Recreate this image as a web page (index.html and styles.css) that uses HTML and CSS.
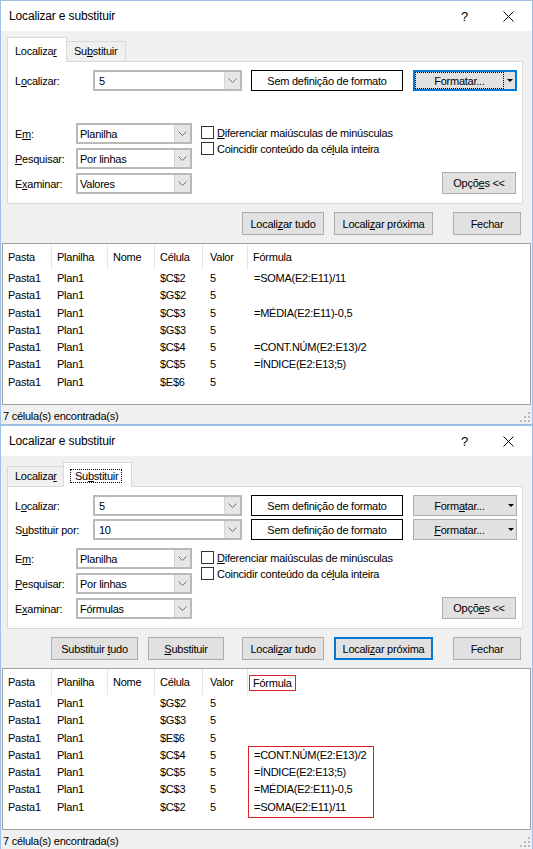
FILE: index.html
```html
<!DOCTYPE html>
<html lang="pt">
<head>
<meta charset="utf-8">
<title>Localizar e substituir</title>
<link rel="stylesheet" href="styles.css">
</head>
<body>

<div class="dialog">
  <div class="titlebar">
    <span class="title">Localizar e substituir</span>
    <span class="help">?</span>
    <span class="close"><svg width="11" height="11" viewBox="0 0 11 11"><path d="M0.5 0.5L10.5 10.5M10.5 0.5L0.5 10.5" stroke="#000" stroke-width="1" fill="none"/></svg></span>
  </div>
  <div class="body">
    <div class="tabs">
      <div class="tab active t-loc-a">Localiza<u>r</u></div>
      <div class="tab t-sub-i">Su<u>b</u>stituir</div>
    </div>
    <div class="panel">
      <div class="row">
        <span class="lbl-top">L<u>o</u>calizar:</span>
        <div class="combo wide"><span class="val">5</span><span class="arrow"><svg width="9" height="5" viewBox="0 0 9 5"><polyline points="0.5,0.5 4.5,4.5 8.5,0.5" fill="none" stroke="#707070" stroke-width="1"/></svg></span></div>
        <div class="fmtbox">Sem definição de formato</div>
        <div class="btn split focus"><span class="splitmain"><span>Formatar...</span></span><span class="caret"></span></div>
      </div>
      <div class="row-spacer"></div>
      <div class="options">
        <div class="fields">
          <div class="field"><span class="flbl">E<u>m</u>:</span><div class="combo narrow"><span class="val">Planilha</span><span class="arrow"><svg width="9" height="5" viewBox="0 0 9 5"><polyline points="0.5,0.5 4.5,4.5 8.5,0.5" fill="none" stroke="#707070" stroke-width="1"/></svg></span></div></div>
          <div class="field"><span class="flbl"><u>P</u>esquisar:</span><div class="combo narrow"><span class="val">Por linhas</span><span class="arrow"><svg width="9" height="5" viewBox="0 0 9 5"><polyline points="0.5,0.5 4.5,4.5 8.5,0.5" fill="none" stroke="#707070" stroke-width="1"/></svg></span></div></div>
          <div class="field"><span class="flbl">E<u>x</u>aminar:</span><div class="combo narrow"><span class="val">Valores</span><span class="arrow"><svg width="9" height="5" viewBox="0 0 9 5"><polyline points="0.5,0.5 4.5,4.5 8.5,0.5" fill="none" stroke="#707070" stroke-width="1"/></svg></span></div></div>
        </div>
        <div class="checks">
          <div class="check"><span class="box"></span><span><u>D</u>iferenciar maiúsculas de minúsculas</span></div>
          <div class="check"><span class="box"></span><span>Coincidir conteúdo da cé<u>l</u>ula inteira</span></div>
        </div>
        <div class="btn opts"><span>Opçõ<u>e</u>s &lt;&lt;</span></div>
      </div>
    </div>
    <div class="actions">
      <div class="btn b-loctudo"><span>Locali<u>z</u>ar tudo</span></div>
      <div class="btn b-locprox"><span>Locali<u>z</u>ar próxima</span></div>
      <div class="btn b-fechar"><span>Fechar</span></div>
    </div>
  </div>
  <div class="list">
    <div class="lrow head">
      <div class="c">Pasta</div><div class="c">Planilha</div><div class="c">Nome</div><div class="c">Célula</div><div class="c cv">Valor</div><div class="c cf">Fórmula</div>
    </div>
    <div class="lrow"><div class="c">Pasta1</div><div class="c">Plan1</div><div class="c"></div><div class="c">$C$2</div><div class="c cv">5</div><div class="c cf">=SOMA(E2:E11)/11</div></div>
    <div class="lrow"><div class="c">Pasta1</div><div class="c">Plan1</div><div class="c"></div><div class="c">$G$2</div><div class="c cv">5</div><div class="c cf"></div></div>
    <div class="lrow"><div class="c">Pasta1</div><div class="c">Plan1</div><div class="c"></div><div class="c">$C$3</div><div class="c cv">5</div><div class="c cf">=MÉDIA(E2:E11)-0,5</div></div>
    <div class="lrow"><div class="c">Pasta1</div><div class="c">Plan1</div><div class="c"></div><div class="c">$G$3</div><div class="c cv">5</div><div class="c cf"></div></div>
    <div class="lrow"><div class="c">Pasta1</div><div class="c">Plan1</div><div class="c"></div><div class="c">$C$4</div><div class="c cv">5</div><div class="c cf">=CONT.NÚM(E2:E13)/2</div></div>
    <div class="lrow"><div class="c">Pasta1</div><div class="c">Plan1</div><div class="c"></div><div class="c">$C$5</div><div class="c cv">5</div><div class="c cf">=ÍNDICE(E2:E13;5)</div></div>
    <div class="lrow"><div class="c">Pasta1</div><div class="c">Plan1</div><div class="c"></div><div class="c">$E$6</div><div class="c cv">5</div><div class="c cf"></div></div>
  </div>
  <div class="status">
    <span>7 célula(s) encontrada(s)</span>
    <svg class="grip" width="10" height="10" viewBox="0 0 10 10"><rect x="8" y="0" width="2" height="2" fill="#b9b9b9"/><rect x="4" y="4" width="2" height="2" fill="#b9b9b9"/><rect x="8" y="4" width="2" height="2" fill="#b9b9b9"/><rect x="0" y="8" width="2" height="2" fill="#b9b9b9"/><rect x="4" y="8" width="2" height="2" fill="#b9b9b9"/><rect x="8" y="8" width="2" height="2" fill="#b9b9b9"/></svg>
  </div>
</div>

<div class="dialog">
  <div class="titlebar">
    <span class="title">Localizar e substituir</span>
    <span class="help">?</span>
    <span class="close"><svg width="11" height="11" viewBox="0 0 11 11"><path d="M0.5 0.5L10.5 10.5M10.5 0.5L0.5 10.5" stroke="#000" stroke-width="1" fill="none"/></svg></span>
  </div>
  <div class="body">
    <div class="tabs">
      <div class="tab t-loc-i">Localiza<u>r</u></div>
      <div class="tab active t-sub-a"><span class="tabfocus">Su<u>b</u>stituir</span></div>
    </div>
    <div class="panel">
      <div class="row">
        <span class="lbl-top">L<u>o</u>calizar:</span>
        <div class="combo wide"><span class="val">5</span><span class="arrow"><svg width="9" height="5" viewBox="0 0 9 5"><polyline points="0.5,0.5 4.5,4.5 8.5,0.5" fill="none" stroke="#707070" stroke-width="1"/></svg></span></div>
        <div class="fmtbox">Sem definição de formato</div>
        <div class="btn split"><span class="splitmain"><span>Form<u>a</u>tar...</span></span><span class="caret"></span></div>
      </div>
      <div class="row">
        <span class="lbl-top">S<u>u</u>bstituir por:</span>
        <div class="combo wide"><span class="val">10</span><span class="arrow"><svg width="9" height="5" viewBox="0 0 9 5"><polyline points="0.5,0.5 4.5,4.5 8.5,0.5" fill="none" stroke="#707070" stroke-width="1"/></svg></span></div>
        <div class="fmtbox">Sem definição de formato</div>
        <div class="btn split"><span class="splitmain"><span><u>F</u>ormatar...</span></span><span class="caret"></span></div>
      </div>
      <div class="options">
        <div class="fields">
          <div class="field"><span class="flbl">E<u>m</u>:</span><div class="combo narrow"><span class="val">Planilha</span><span class="arrow"><svg width="9" height="5" viewBox="0 0 9 5"><polyline points="0.5,0.5 4.5,4.5 8.5,0.5" fill="none" stroke="#707070" stroke-width="1"/></svg></span></div></div>
          <div class="field"><span class="flbl"><u>P</u>esquisar:</span><div class="combo narrow"><span class="val">Por linhas</span><span class="arrow"><svg width="9" height="5" viewBox="0 0 9 5"><polyline points="0.5,0.5 4.5,4.5 8.5,0.5" fill="none" stroke="#707070" stroke-width="1"/></svg></span></div></div>
          <div class="field"><span class="flbl">E<u>x</u>aminar:</span><div class="combo narrow"><span class="val">Fórmulas</span><span class="arrow"><svg width="9" height="5" viewBox="0 0 9 5"><polyline points="0.5,0.5 4.5,4.5 8.5,0.5" fill="none" stroke="#707070" stroke-width="1"/></svg></span></div></div>
        </div>
        <div class="checks">
          <div class="check"><span class="box"></span><span><u>D</u>iferenciar maiúsculas de minúsculas</span></div>
          <div class="check"><span class="box"></span><span>Coincidir conteúdo da cé<u>l</u>ula inteira</span></div>
        </div>
        <div class="btn opts"><span>Opçõ<u>e</u>s &lt;&lt;</span></div>
      </div>
    </div>
    <div class="actions">
      <div class="btn b-subtudo"><span>Substituir <u>t</u>udo</span></div>
      <div class="btn b-sub"><span><u>S</u>ubstituir</span></div>
      <div class="btn b-loctudo b-gap"><span>Locali<u>z</u>ar tudo</span></div>
      <div class="btn b-locprox focusb"><span>Locali<u>z</u>ar próxima</span></div>
      <div class="btn b-fechar"><span>Fechar</span></div>
    </div>
  </div>
  <div class="list">
    <div class="lrow head">
      <div class="c">Pasta</div><div class="c">Planilha</div><div class="c">Nome</div><div class="c">Célula</div><div class="c cv">Valor</div><div class="c cf"><span class="redbox">Fórmula</span></div>
    </div>
    <div class="lrow"><div class="c">Pasta1</div><div class="c">Plan1</div><div class="c"></div><div class="c">$G$2</div><div class="c cv">5</div><div class="c cf"></div></div>
    <div class="lrow"><div class="c">Pasta1</div><div class="c">Plan1</div><div class="c"></div><div class="c">$G$3</div><div class="c cv">5</div><div class="c cf"></div></div>
    <div class="lrow"><div class="c">Pasta1</div><div class="c">Plan1</div><div class="c"></div><div class="c">$E$6</div><div class="c cv">5</div><div class="c cf"></div></div>
    <div class="lrow"><div class="c">Pasta1</div><div class="c">Plan1</div><div class="c"></div><div class="c">$C$4</div><div class="c cv">5</div><div class="c cf">=CONT.NÚM(E2:E13)/2</div></div>
    <div class="lrow"><div class="c">Pasta1</div><div class="c">Plan1</div><div class="c"></div><div class="c">$C$5</div><div class="c cv">5</div><div class="c cf">=ÍNDICE(E2:E13;5)</div></div>
    <div class="lrow"><div class="c">Pasta1</div><div class="c">Plan1</div><div class="c"></div><div class="c">$C$3</div><div class="c cv">5</div><div class="c cf">=MÉDIA(E2:E11)-0,5</div></div>
    <div class="lrow"><div class="c">Pasta1</div><div class="c">Plan1</div><div class="c"></div><div class="c">$C$2</div><div class="c cv">5</div><div class="c cf">=SOMA(E2:E11)/11</div></div>
    <div class="redmark"></div>
  </div>
  <div class="status">
    <span>7 célula(s) encontrada(s)</span>
    <svg class="grip" width="10" height="10" viewBox="0 0 10 10"><rect x="8" y="0" width="2" height="2" fill="#b9b9b9"/><rect x="4" y="4" width="2" height="2" fill="#b9b9b9"/><rect x="8" y="4" width="2" height="2" fill="#b9b9b9"/><rect x="0" y="8" width="2" height="2" fill="#b9b9b9"/><rect x="4" y="8" width="2" height="2" fill="#b9b9b9"/><rect x="8" y="8" width="2" height="2" fill="#b9b9b9"/></svg>
  </div>
</div>

</body>
</html>
```

FILE: styles.css
```css
* { box-sizing: border-box; }
html, body { margin: 0; padding: 0; }
body {
  width: 533px;
  height: 849px;
  overflow: hidden;
  background: #f0f0f0;
  color: #000;
  font-family: "Liberation Sans", Arial, sans-serif;
  font-size: 11px;
  letter-spacing: -0.25px;
}
u { text-decoration: underline; text-underline-offset: 1px; }

.dialog {
  width: 533px;
  border: 1px solid #9dc0e6;
  background: #f0f0f0;
  display: flex;
  flex-direction: column;
}

.titlebar {
  height: 30px;
  flex: none;
  background: #fff;
  display: flex;
  align-items: center;
  padding-left: 8px;
}
.title { font-size: 12px; letter-spacing: -0.15px; }
.help { margin-left: auto; font-size: 13px; width: 8px; }
.close { display: flex; margin-left: 34px; margin-right: 18px; }

.body { flex: none; padding: 6px 9px 0 6px; }

.tabs { display: flex; align-items: flex-end; height: 24px; }
.tab {
  height: 20px;
  line-height: 13px;
  padding: 3px 0 3px 7px;
  border: 1px solid #d9d9d9;
  border-bottom: none;
  background: #f0f0f0;
  white-space: nowrap;
}
.tab.active {
  height: 25px;
  padding-top: 7px;
  margin-bottom: -1px;
  background: #fff;
  position: relative;
  z-index: 1;
}
.tab + .tab { margin-left: -1px; }
.t-loc-a { width: 60px; }
.t-sub-i { width: 60px; }
.t-loc-i { width: 57px; }
.t-sub-a { width: 69px; padding-left: 6px; }
.tabfocus { display: inline-block; border: 1px dotted #000; padding: 0 3px 0 4px; line-height: 12px; margin-top: -1px; }

.panel {
  background: #fff;
  border: 1px solid #d9d9d9;
  padding: 8px 5px 9px 7px;
}

.row { display: flex; align-items: center; height: 21px; }
.row + .row { margin-top: 3px; }
.row-spacer { height: 21px; margin-top: 3px; }
.lbl-top { width: 78px; flex: none; white-space: nowrap; }

.combo {
  height: 21px;
  flex: none;
  display: flex;
  align-items: stretch;
  background: #fff;
  border: 2px solid #b9b9b9;
}
.combo.wide { width: 149px; }
.combo.wide .val { padding-left: 4px; }
.combo.narrow { width: 116px; }
.combo .val { flex: 1; display: flex; align-items: center; padding-left: 2px; white-space: nowrap; }
.combo .arrow {
  width: 16px;
  background: #e6e6e6;
  border-left: 1px solid #d4d4d4;
  display: flex;
  align-items: center;
  justify-content: center;
}

.fmtbox {
  width: 152px;
  height: 21px;
  flex: none;
  margin-left: 9px;
  border: 1px solid #000;
  background: #fff;
  display: flex;
  align-items: center;
  justify-content: center;
  white-space: nowrap;
}

.btn {
  height: 22px;
  flex: none;
  background: #e1e1e1;
  border: 1px solid #adadad;
  display: flex;
  align-items: center;
  justify-content: center;
  white-space: nowrap;
}

.split {
  width: 104px;
  height: 21px;
  margin-left: 10px;
  justify-content: flex-start;
  align-items: stretch;
}
.splitmain {
  flex: 1;
  display: flex;
  align-items: center;
  justify-content: center;
  border: 1px solid transparent;
}
.split.focus { border: 2px solid #0078d7; }
.split.focus .splitmain { border: 1px dotted #000; }
.caret {
  width: 11px;
  flex: none;
  display: flex;
  align-items: center;
  justify-content: center;
}
.caret::before {
  content: "";
  border-left: 3px solid transparent;
  border-right: 3px solid transparent;
  border-top: 3px solid #000;
}

.options { display: flex; margin-top: 8px; }
.fields { display: flex; flex-direction: column; gap: 4px; }
.field { display: flex; align-items: center; height: 21px; }
.flbl { width: 61px; flex: none; white-space: nowrap; }
.checks { margin-left: 9px; padding-top: 3px; display: flex; flex-direction: column; gap: 3px; }
.check { display: flex; align-items: center; height: 13px; gap: 3px; white-space: nowrap; }
.box { width: 13px; height: 13px; flex: none; border: 1px solid #333; background: #fff; }
.opts { margin-left: auto; margin-right: 1px; align-self: flex-end; width: 74px; }

.actions {
  display: flex;
  justify-content: flex-end;
  gap: 10px;
  margin: 8px 2px 8px 0;
}
.actions .btn { height: 23px; }
.b-subtudo { width: 87px; }
.b-sub { width: 76px; }
.b-gap { margin-left: 8px; }
.b-loctudo { width: 82px; }
.b-locprox { width: 99px; }
.b-fechar { width: 68px; margin-left: 10px; }
.focusb { border: 2px solid #0078d7; }

.list {
  flex: none;
  height: 162px;
  margin: 0 1px;
  border: 1px solid #a0a0a0;
  background: #fff;
  position: relative;
}
.lrow {
  display: grid;
  grid-template-columns: 49px 56px 47px 48px 45px 1fr;
  height: 17.3px;
  line-height: 17.3px;
}
.lrow .c { padding-left: 5px; white-space: nowrap; }
.lrow .cv { padding-left: 7px; }
.lrow .cf { padding-left: 6px; }
.lrow.head { height: 26px; line-height: 26px; }
.lrow.head .c { border-right: 1px solid #e5e5e5; }
.lrow.head .cf { border-right: none; padding-left: 5px; }
.redbox {
  display: inline-block;
  line-height: 14px;
  border: 1px solid #e0202a;
  padding: 0 3px;
  margin-left: -4px;
  vertical-align: middle;
}
.redmark {
  position: absolute;
  left: 245px;
  top: 77px;
  width: 126px;
  height: 72px;
  border: 1px solid #e0202a;
}

.status {
  height: 19px;
  flex: none;
  display: flex;
  align-items: center;
  padding: 3px 0 0 2px;
}
.grip { margin-left: auto; align-self: flex-end; margin-right: 2px; margin-bottom: 2px; }
```
